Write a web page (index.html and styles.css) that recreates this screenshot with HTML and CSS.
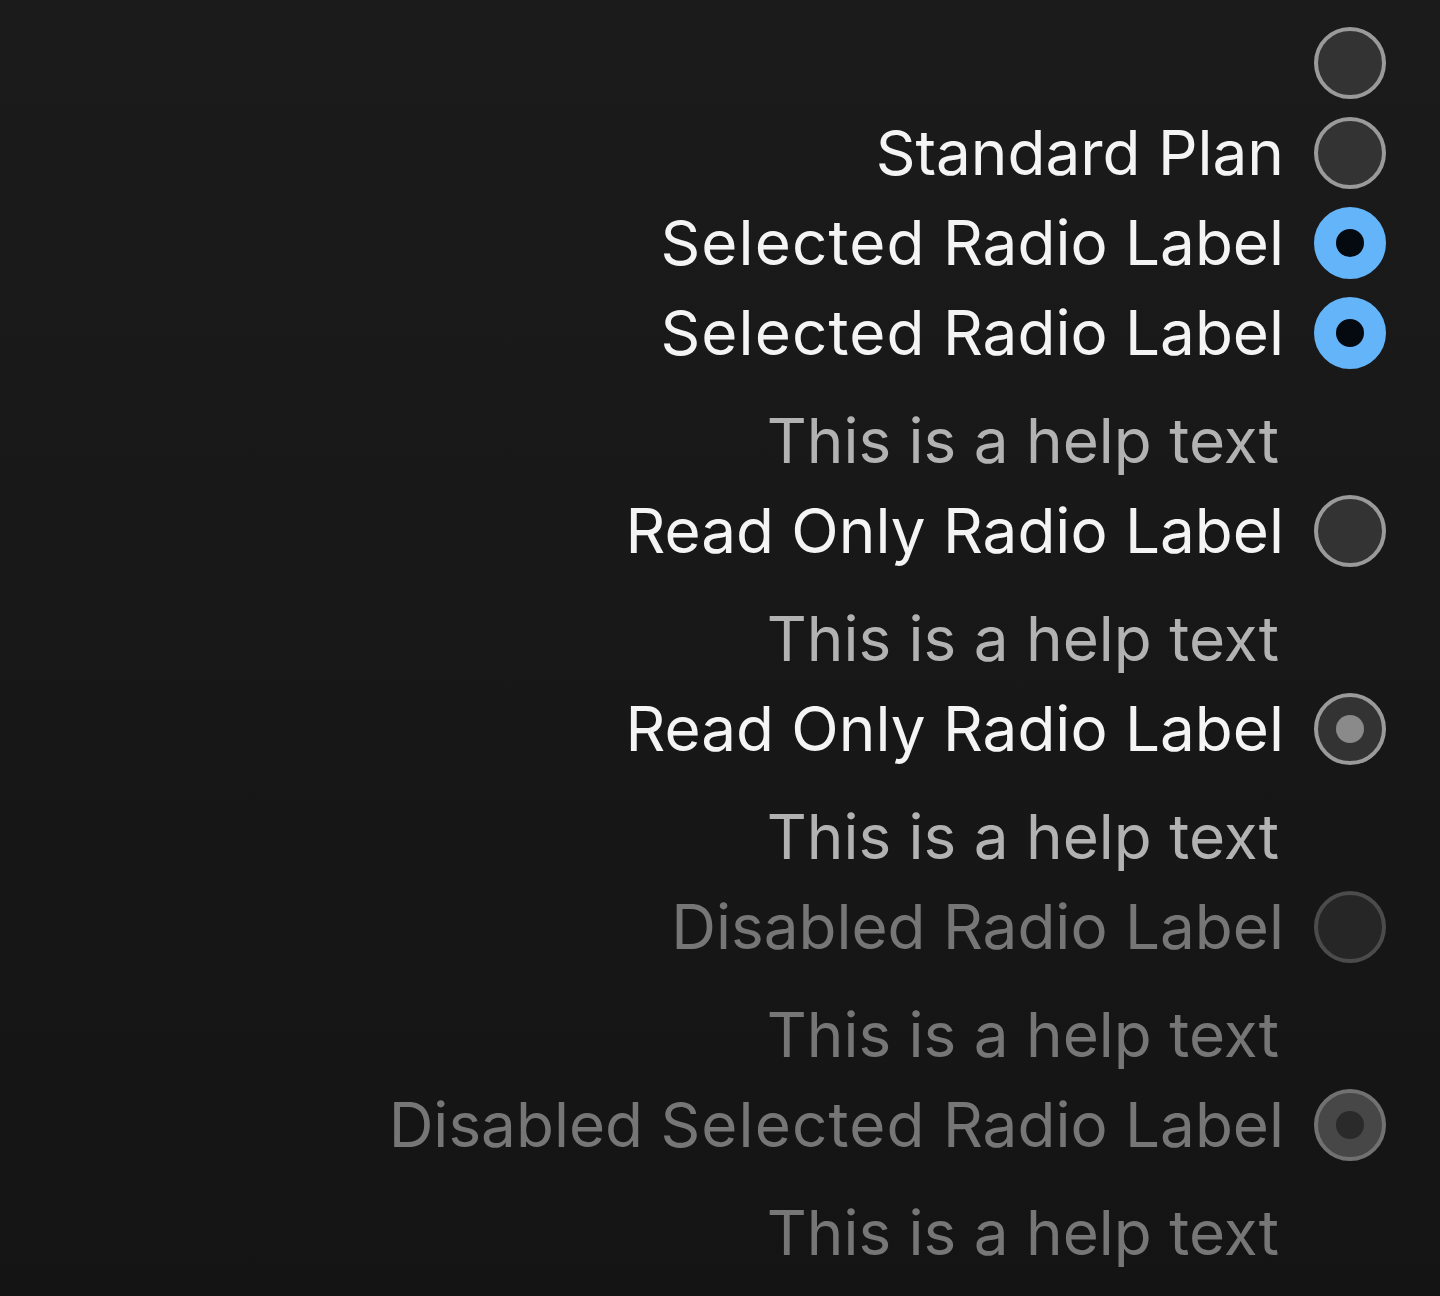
FILE: index.html
```html
<!DOCTYPE html>
<html lang="en">
<head>
<meta charset="utf-8">
<title>Radio</title>
<link rel="stylesheet" href="styles.css">
</head>
<body>
<div class="group">
  <div class="item">
    <label class="row"><span class="label"></span><span class="radio"></span></label>
  </div>
  <div class="item">
    <label class="row"><span class="label">Standard Plan</span><span class="radio"></span></label>
  </div>
  <div class="item">
    <label class="row"><span class="label"><span class="wide">Selected</span> Radio Label</span><span class="radio checked"></span></label>
  </div>
  <div class="item">
    <label class="row"><span class="label"><span class="wide">Selected</span> Radio Label</span><span class="radio checked"></span></label>
    <div class="help">This is a help text</div>
  </div>
  <div class="item">
    <label class="row"><span class="label">Read Only Radio Label</span><span class="radio"></span></label>
    <div class="help">This is a help text</div>
  </div>
  <div class="item">
    <label class="row"><span class="label">Read Only Radio Label</span><span class="radio readonly-checked"></span></label>
    <div class="help">This is a help text</div>
  </div>
  <div class="item disabled">
    <label class="row"><span class="label">Disabled Radio Label</span><span class="radio"></span></label>
    <div class="help">This is a help text</div>
  </div>
  <div class="item disabled">
    <label class="row"><span class="label">Disabled <span class="wide">Selected</span> Radio Label</span><span class="radio disabled-checked"></span></label>
    <div class="help">This is a help text</div>
  </div>
</div>
</body>
</html>
```

FILE: styles.css
```css
html, body {
  margin: 0;
  padding: 0;
}
body {
  min-height: 1296px;
  background: linear-gradient(180deg, #1b1b1b 0%, #141414 100%);
  font-family: Inter, "Noto Sans", sans-serif;
  color: #f4f4f4;
}
.group {
  display: flex;
  flex-direction: column;
  align-items: flex-end;
  padding: 18px 54px 0 0;
}
.item {
  display: flex;
  flex-direction: column;
  align-items: flex-end;
}
.row {
  display: flex;
  align-items: center;
  justify-content: flex-end;
  gap: 30px;
  height: 90px;
}
.label {
  font-size: 62px;
  line-height: 90px;
  color: #f4f4f4;
  white-space: nowrap;
}
.wide {
  letter-spacing: 1.1px;
}
.radio {
  box-sizing: border-box;
  width: 72px;
  height: 72px;
  border-radius: 50%;
  border: 4.5px solid #9a9a9a;
  background: #333333;
  display: flex;
  align-items: center;
  justify-content: center;
  flex: none;
}
.radio.checked {
  border: 22px solid #63b4f9;
  background: #050a10;
}
.radio.readonly-checked::after,
.radio.disabled-checked::after {
  content: "";
  width: 28px;
  height: 28px;
  border-radius: 50%;
  background: #8a8a8a;
}
.help {
  margin-top: 18px;
  margin-right: 107px;
  font-size: 62px;
  line-height: 90px;
  color: #b2b2b2;
  white-space: nowrap;
}
.disabled .label,
.disabled .help {
  color: #767676;
}
.disabled .radio {
  border-color: #4b4b4b;
  background: #262626;
}
.disabled .radio.disabled-checked {
  border-color: #717171;
  background: #474747;
}
.radio.disabled-checked::after {
  background: #2a2a2a;
}
```
